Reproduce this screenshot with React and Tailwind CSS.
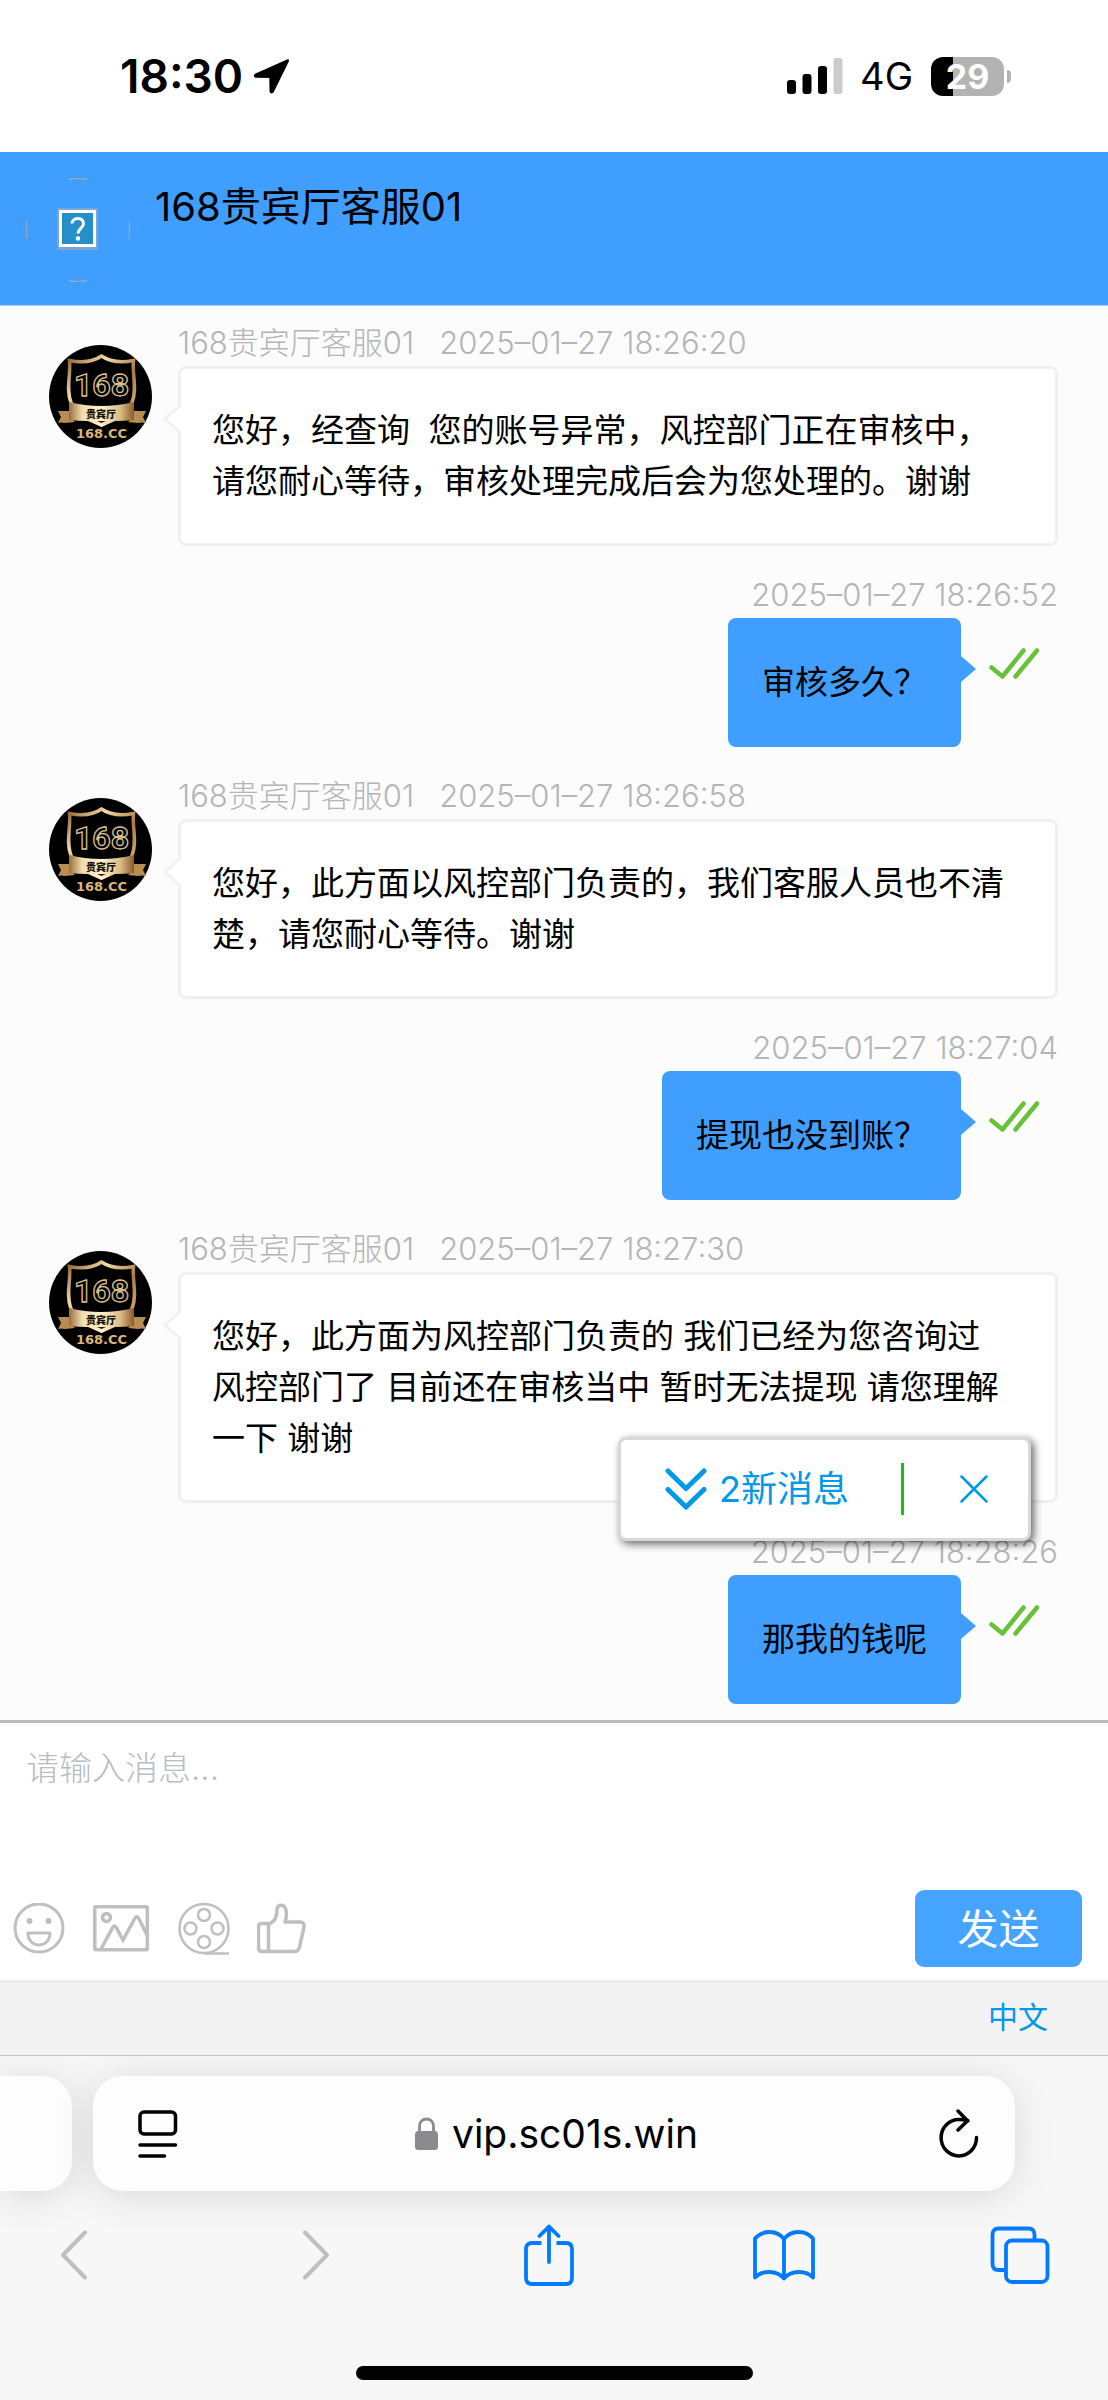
import React from 'react';

const messages = [
  {
    id: 1,
    from: 'agent',
    time: '2025–01–27 18:26:20',
    text: '您好，经查询  您的账号异常，风控部门正在审核中，\n请您耐心等待，审核处理完成后会为您处理的。谢谢',
  },
  { id: 2, from: 'me', time: '2025–01–27 18:26:52', text: '审核多久？' },
  {
    id: 3,
    from: 'agent',
    time: '2025–01–27 18:26:58',
    text: '您好，此方面以风控部门负责的，我们客服人员也不清\n楚，请您耐心等待。谢谢',
  },
  { id: 4, from: 'me', time: '2025–01–27 18:27:04', text: '提现也没到账？' },
  {
    id: 5,
    from: 'agent',
    time: '2025–01–27 18:27:30',
    text: '您好，此方面为风控部门负责的 我们已经为您咨询过\n风控部门了 目前还在审核当中 暂时无法提现 请您理解\n一下 谢谢',
  },
  { id: 6, from: 'me', time: '2025–01–27 18:28:26', text: '那我的钱呢' },
];

function StatusBar() {
  return (
    <div className="flex h-[152px] items-center justify-between bg-white pr-[97px] pl-[120px] text-black">
      <div className="flex items-center gap-[10px]">
        <span className="text-[46px] leading-[56px] font-semibold">18:30</span>
        <svg width="37" height="37" viewBox="0 0 37 37">
          <path d="M34 1.5 2.5 15.5c-2.6 1.2-2 4.3.8 4.3l13 .1.2 13.200c0 2.700 3.200 3.300 4.400.7L35.700 3.800C36.500 2 35.500.8 34 1.500Z" />
        </svg>
      </div>
      <div className="flex items-center">
        <svg width="57" height="36" viewBox="0 0 57 36">
          <rect x="0" y="22" width="9" height="14" rx="3" />
          <rect x="15.500" y="16" width="9" height="20" rx="3" />
          <rect x="31" y="8" width="9" height="28" rx="3" />
          <rect x="46.500" y="0" width="9" height="36" rx="3" fill="#cccccc" />
        </svg>
        <span className="ml-4 text-[38px] leading-[48px]">4G</span>
        <div className="ml-[18px] flex h-[39px] w-[73px] items-center justify-center rounded-[12px] bg-linear-to-r from-black from-30% to-[#b3b3b3] to-30% text-[34px] leading-[39px] font-bold text-white">
          29
        </div>
        <div className="ml-[3px] h-[13px] w-1 rounded-r-full bg-[#b3b3b3]" />
      </div>
    </div>
  );
}

function ChatHeader() {
  return (
    <header className="flex h-[154px] border-b border-[#a3cffb] bg-[#409eff] pl-[26px]">
      <svg className="mt-[26px]" width="104" height="104" viewBox="0 0 104 104" fill="none">
        <path d="M43 1.500Q52-.5 61 1.500M43 102.500q9 2 18 0M.5 43v18M103.500 43v18" stroke="#8fa9c4" strokeWidth="1.500" />
        <rect x="31" y="30" width="41" height="42" fill="#7ea4cf" />
        <rect x="33" y="32" width="37" height="37" fill="#fff" />
        <rect x="36" y="35" width="31" height="31" fill="#2590c8" />
        <path d="M46 45.500c.5-7 12-6.500 11.500.5-.3 4-5.500 4.500-5.500 9.500" stroke="#fff" strokeWidth="3" />
        <circle cx="52" cy="60.500" r="2.200" fill="#fff" />
      </svg>
      <h1 className="mt-[30px] ml-[25px] text-[40px] leading-[50px] text-black">168贵宾厅客服01</h1>
    </header>
  );
}

function Avatar() {
  return (
    <svg className="mt-[25px] mr-[26px] shrink-0" width="103" height="103" viewBox="0 0 103 103">
      <defs>
        <linearGradient id="gold" x1="0" y1="0" x2="1" y2="1">
          <stop offset="0" stopColor="#8a5a2b" />
          <stop offset="0.3" stopColor="#f3dba6" />
          <stop offset="0.6" stopColor="#a97a42" />
          <stop offset="1" stopColor="#e6c690" />
        </linearGradient>
        <linearGradient id="ribbon">
          <stop offset="0" stopColor="#9a6c3c" />
          <stop offset="0.2" stopColor="#f0dcae" />
          <stop offset="0.5" stopColor="#fff3cf" />
          <stop offset="0.8" stopColor="#d8b981" />
          <stop offset="1" stopColor="#8a5a2b" />
        </linearGradient>
      </defs>
      <circle cx="51.500" cy="51.500" r="51.500" fill="#000" />
      <path
        d="M52.500 11c-8 5.500-19 7-32 4.500 1.500 14-4 28 1.500 42 5 10 17 15 30.500 22.500C66 72.500 78 67.500 83 57.500c5.500-14 0-28 1.500-42-13 2.500-24 1-32-4.500Z"
        fill="none"
        stroke="url(#gold)"
        strokeWidth="3.500"
      />
      <text
        x="52.500"
        y="51"
        textAnchor="middle"
        fontSize="32"
        fontWeight="700"
        fontFamily="Roboto, sans-serif"
        fill="#000"
        stroke="#dcc28c"
        strokeWidth="1.300"
      >
        168
      </text>
      <path d="M9 66h14v8l3 3-10 1q-4-1-7 0l3-6Zm88 0H82v8l-3 3 10 1q4-1 8 0l-3-6Z" fill="#b98c53" />
      <path d="M20 57q32 8 65 0v18q-9 1-19 1l-13.500 6L39 76q-10 0-19-1Z" fill="url(#ribbon)" />
      <text
        x="52"
        y="73"
        textAnchor="middle"
        fontSize="10"
        fontWeight="900"
        fontFamily="Noto Sans CJK SC, sans-serif"
        fill="#1a120a"
      >
        贵宾厅
      </text>
      <path d="M48 76h9l-4.500 2Z" fill="#2a1c0e" />
      <text
        x="52.500"
        y="93"
        textAnchor="middle"
        fontSize="13"
        fontWeight="700"
        fontFamily="DejaVu Sans, sans-serif"
        fill="#d9b676"
      >
        168.CC
      </text>
    </svg>
  );
}

function AgentMessage({ message }) {
  return (
    <div className="flex pl-[49px]">
      <Avatar />
      <div className="min-w-0 flex-1">
        <div className="flex gap-[25px] text-[31px] leading-[46px] font-light text-[#b5b5b5]">
          <span>168贵宾厅客服01</span>
          <time>{message.time}</time>
        </div>
        <div className="relative rounded-lg border-[3px] border-[#f0f0f0] bg-white px-[31px] pt-9 pb-9 text-[33px] leading-[51px] whitespace-pre-wrap text-black">
          <svg className="absolute top-[34px] -left-[18px]" width="18" height="32" viewBox="0 0 18 32">
            <path d="M18 3v26L1.500 16Z" fill="#fff" />
            <path d="M17 3 1.500 16 17 29" fill="none" stroke="#f0f0f0" strokeWidth="2.500" />
          </svg>
          {message.text}
        </div>
      </div>
    </div>
  );
}

function OwnMessage({ message }) {
  return (
    <div className="flex flex-col items-end">
      <time className="text-[31px] leading-[46px] font-light text-[#b5b5b5]">{message.time}</time>
      <div className="flex items-start pr-[18px]">
        <div className="relative rounded-lg bg-[#409eff] px-[34px] pt-[39px] pb-[39px] text-[33px] leading-[51px] text-black">
          {message.text}
          <svg className="absolute top-[38px] -right-[15px]" width="15" height="26" viewBox="0 0 15 26">
            <path d="M0 0v26l15-13Z" fill="#409eff" />
          </svg>
        </div>
        <svg
          className="mt-[29px] ml-[28px]"
          width="51"
          height="33"
          viewBox="0 0 51 33"
          fill="none"
          stroke="#67c23a"
          strokeWidth="4.500"
          strokeLinecap="round"
          strokeLinejoin="round"
        >
          <path d="M2.500 20.500 13.500 29.500 34.500 3.500M26.500 29.500 48 3.500" />
        </svg>
      </div>
    </div>
  );
}

function NewMessages() {
  return (
    <div className="absolute right-[77px] bottom-[179px] flex h-[104px] items-center rounded-lg border-[3px] border-[#d8d8d8] bg-white pr-[40px] pl-[44px] text-[#0099e8] shadow-[3px_3px_8px_rgba(0,0,0,0.6)]">
      <button className="flex items-center gap-3 text-[36px] leading-[50px]">
        <svg
          width="42"
          height="42"
          viewBox="0 0 42 42"
          fill="none"
          stroke="currentColor"
          strokeWidth="5"
          strokeLinecap="round"
          strokeLinejoin="round"
        >
          <path d="m3 3 18 17.500L39 3M3 21.500 21 39l18-17.500" />
        </svg>
        <span>2新消息</span>
      </button>
      <div className="ml-[52px] h-[52px] w-[3px] bg-[#16c113]" />
      <button className="ml-14" aria-label="关闭">
        <svg width="28" height="28" viewBox="0 0 28 28" fill="none" stroke="currentColor" strokeWidth="2.500" strokeLinecap="round">
          <path d="m1.500 1.500 25 25m0-25-25 25" />
        </svg>
      </button>
    </div>
  );
}

function Composer() {
  return (
    <section className="border-t-[3px] border-[#bababa] bg-white">
      <textarea
        aria-label="消息"
        placeholder="请输入消息..."
        className="block h-[154px] w-full resize-none px-[26px] pt-5 text-[33px] leading-[51px] font-light outline-none placeholder:text-[#b8bcc6]"
      />
      <div className="flex h-[103px] items-center pr-[26px] pl-[13px] text-[#bfbfbf]">
        <button aria-label="表情">
          <svg width="52" height="52" viewBox="0 0 52 52" fill="none" stroke="currentColor" strokeWidth="3">
            <circle cx="26" cy="25" r="24" />
            <circle cx="16.500" cy="18" r="3" fill="currentColor" stroke="none" />
            <circle cx="35.500" cy="18" r="3" fill="currentColor" stroke="none" />
            <path d="M15 30h22c0 16-22 16-22 0Z" strokeLinejoin="round" />
          </svg>
        </button>
        <button className="ml-7" aria-label="图片">
          <svg width="57" height="48" viewBox="0 0 57 48" fill="none" stroke="currentColor" strokeWidth="3.500">
            <rect x="1.800" y="1.800" width="52.500" height="43" rx="1" />
            <circle cx="13.500" cy="12.500" r="4" />
            <path d="M8 44 20 22q1.500-2 3 0l7 13 12-22q1.500-2.500 3.500 0L55 32" />
          </svg>
        </button>
        <button className="ml-7" aria-label="视频">
          <svg width="52" height="54" viewBox="0 0 52 54" fill="none" stroke="currentColor" strokeWidth="2.500">
            <circle cx="26" cy="26.500" r="24.500" />
            <circle cx="26" cy="13" r="6" />
            <circle cx="12.500" cy="26.500" r="6" />
            <circle cx="39.500" cy="26.500" r="6" />
            <circle cx="26" cy="40" r="6" />
            <path d="M26 51.500h25" />
          </svg>
        </button>
        <button className="ml-[27px]" aria-label="赞">
          <svg width="49" height="52" viewBox="0 0 49 52" fill="none" stroke="currentColor" strokeWidth="3.500" strokeLinejoin="round">
            <path d="M5 20.500h8c5-2 7-8 7-14 0-5 6-5.500 8-2 2 4 1.500 10 0 14.500h15c3 0 4.500 2 4 5l-4.500 20c-.8 3-2 4.500-5 4.500H5.500c-2.500 0-4-1.500-4-4V24c0-2 1-3.500 3.500-3.500ZM11.500 20.500v28" />
          </svg>
        </button>
        <button className="ml-auto h-[77px] w-[167px] rounded-[9px] bg-[#45a4ff] text-[41px] leading-[50px] text-white">发送</button>
      </div>
    </section>
  );
}

function BrowserBar() {
  return (
    <footer className="overflow-hidden border-t border-[#c3c3c3] bg-[#f7f7f7]">
      <div className="flex gap-[21px] pt-5 pr-[93px] pb-[20px]">
        <div className="h-[115px] w-[72px] shrink-0 rounded-r-[30px] bg-[#fdfdfd] shadow-[0_4px_40px_rgba(0,0,0,0.12)]" />
        <div className="flex h-[115px] flex-1 items-center justify-between rounded-[30px] bg-[#fdfdfd] pr-[36px] pl-[45px] text-black shadow-[0_4px_40px_rgba(0,0,0,0.12)]">
          <button aria-label="页面菜单">
            <svg width="40" height="48" viewBox="0 0 40 48" fill="none" stroke="currentColor" strokeWidth="3.500" strokeLinecap="round">
              <rect x="2" y="2" width="35.500" height="22" rx="4" />
              <path d="M2 35h35.500M2 46h24.500" />
            </svg>
          </button>
          <div className="flex items-center gap-[14px] pr-1">
            <svg width="23" height="34" viewBox="0 0 23 34" fill="none">
              <path d="M4.500 15V9.500c0-10 14-10 14 0V15" stroke="#8a8a8f" strokeWidth="2.800" />
              <rect x="0" y="14" width="23" height="19" rx="3.500" fill="#8a8a8f" />
            </svg>
            <span className="text-[39px] leading-[50px]">vip.sc01s.win</span>
          </div>
          <button aria-label="刷新">
            <svg
              width="40"
              height="52"
              viewBox="0 0 40 52"
              fill="none"
              stroke="currentColor"
              strokeWidth="3.500"
              strokeLinecap="round"
              strokeLinejoin="round"
            >
              <path d="M37.500 29.500A17.700 18.200 0 1 1 20 11.500q5 0 9 1.200M19 3l9.500 9.700L19 22" />
            </svg>
          </button>
        </div>
      </div>
      <nav className="flex items-center justify-between pr-[57px] pl-[43px] text-[#007aff]">
        <button className="flex h-[88px] w-[62px] items-center justify-center text-[#bfbfbf]" aria-label="后退">
          <svg width="28" height="50" viewBox="0 0 28 50" fill="none" stroke="currentColor" strokeWidth="4" strokeLinecap="round" strokeLinejoin="round">
            <path d="M25 2.500 3 25l22 22.500" />
          </svg>
        </button>
        <button className="flex h-[88px] w-[62px] items-center justify-end pr-3 text-[#bfbfbf]" aria-label="前进">
          <svg width="28" height="50" viewBox="0 0 28 50" fill="none" stroke="currentColor" strokeWidth="4" strokeLinecap="round" strokeLinejoin="round">
            <path d="m3 2.500 22 22.500L3 47.500" />
          </svg>
        </button>
        <button className="flex h-[88px] w-[62px] items-center justify-end pr-1" aria-label="分享">
          <svg width="50" height="62" viewBox="0 0 50 62" fill="none" stroke="currentColor" strokeWidth="3.800" strokeLinejoin="round">
            <path d="M17.500 19H8q-6 0-6 6v29q0 6 6 6h34q6 0 6-6V25q0-6-6-6h-9.500" />
            <path d="M25 38V2.500M15.500 12 25 2.500l9.500 9.500" strokeLinecap="round" />
          </svg>
        </button>
        <button className="flex h-[88px] w-[62px] items-center justify-center" aria-label="书签">
          <svg width="62" height="52" viewBox="0 0 62 52" fill="none" stroke="currentColor" strokeWidth="3.800" strokeLinejoin="round" strokeLinecap="round">
            <path d="M31 10C24 1 10 .5 2 9.500v39C9 41 24 41 31 49.500c7-8.500 22-8.500 29-1v-39C52 .5 38 1 31 10Zm0 0v39" />
          </svg>
        </button>
        <button className="flex h-[88px] w-[62px] items-center justify-center" aria-label="标签页">
          <svg width="60" height="58" viewBox="0 0 60 58" fill="none" stroke="currentColor" strokeWidth="3.800">
            <path d="M44.500 14V8.500q0-6-6-6H8.500q-6 0-6 6V38q0 6 6 6H16" />
            <rect x="16" y="14.500" width="41.500" height="41.500" rx="6" />
          </svg>
        </button>
      </nav>
      <div className="mx-auto mt-[67px] mb-5 h-[14px] w-[397px] rounded-full bg-black" />
    </footer>
  );
}

function App() {
  return (
    <div className="flex flex-col bg-white font-['Inter','Noto_Sans_CJK_SC',sans-serif]">
      <StatusBar />
      <ChatHeader />
      <main className="relative flex flex-col gap-[26px] bg-[#fcfcfc] pt-[14px] pr-[50px] pb-4">
        {messages.map((message) =>
          message.from === 'agent' ? (
            <AgentMessage key={message.id} message={message} />
          ) : (
            <OwnMessage key={message.id} message={message} />
          )
        )}
        <NewMessages />
      </main>
      <Composer />
      <div className="flex h-[75px] items-center justify-end border-t-[3px] border-[#ededed] bg-[#f3f3f3] pr-[60px] pb-1">
        <button className="text-[30px] leading-[46px] text-[#0099e8]">中文</button>
      </div>
      <BrowserBar />
    </div>
  );
}

export default App;
